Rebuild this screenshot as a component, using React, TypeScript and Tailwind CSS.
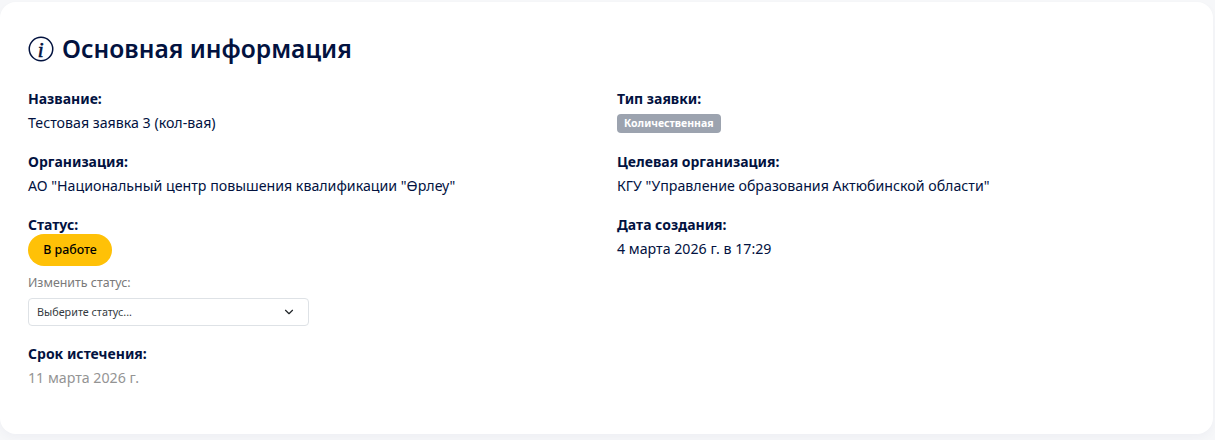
import { ChevronDown } from 'lucide-react';

function InfoIcon() {
  return (
    <svg width="26" height="26" viewBox="0 0 26 26" fill="none" className="shrink-0">
      <circle cx="13" cy="13" r="11.75" stroke="#02123f" strokeWidth="1.5" />
      <text x="12.7" y="20.5" textAnchor="middle" fontFamily="'Liberation Serif', serif" fontStyle="italic" fontSize="21" fill="#02123f" stroke="#02123f" strokeWidth="0.6">
        i
      </text>
    </svg>
  );
}

function Label({ children }: { children: React.ReactNode }) {
  return <div className="text-[14px] leading-[21px] font-bold text-[#02123f]">{children}</div>;
}

function Field({ label, value }: { label: string; value: string }) {
  return (
    <div className="mb-[18px]">
      <Label>{label}</Label>
      <div className="mt-[3px] text-[14.2px] leading-[21px] text-[#02123f]">{value}</div>
    </div>
  );
}

export default function App() {
  return (
    <div className="h-[440px] w-[1215px] overflow-hidden bg-[#f6f7f9] font-['Noto_Sans',sans-serif]">
      <div className="mr-[2px] mt-[2px] h-[432px] rounded-[16px] bg-white px-[28px] pt-[29px] shadow-[0_4px_10px_rgba(20,30,80,0.03)]">
        <div className="mb-[21px] flex h-[36px] items-center gap-[8px]">
          <InfoIcon />
          <h2 className="text-[24.6px] leading-[36px] font-semibold text-[#02123f]">Основная информация</h2>
        </div>
        <div className="grid grid-cols-[589px_1fr]">
          <div>
            <Field label="Название:" value="Тестовая заявка 3 (кол-вая)" />
            <Field label="Организация:" value='АО "Национальный центр повышения квалификации "Өрлеу"' />
            <div className="mb-[17px]">
              <Label>Статус:</Label>
              <span className="-mt-[1px] flex h-[32px] w-[84px] items-center justify-center rounded-[16px] bg-[#ffc107] text-[12.4px] font-medium text-black">
                В работе
              </span>
              <div className="mt-[8px] text-[12.4px] leading-[18px] text-[#7a7a7a]">Изменить статус:</div>
              <div className="mt-[6px] flex h-[28px] w-[281px] items-center justify-between rounded-[4px] border border-[#dee2e6] pl-[8px] pr-[12px] text-[10.8px] text-[#343a40]">
                <span>Выберите статус...</span>
                <ChevronDown size={14} strokeWidth={2} className="text-[#212529]" />
              </div>
            </div>
            <Label>Срок истечения:</Label>
            <div className="mt-[3px] text-[14.2px] leading-[21px] text-[#949494]">11 марта 2026 г.</div>
          </div>
          <div>
            <div className="mb-[18px]">
              <Label>Тип заявки:</Label>
              <div className="mt-[5px] flex h-[19px] items-center">
                <span className="inline-flex h-[19px] items-center rounded-[4px] bg-[#9ca3af] px-[7px] text-[10.5px] font-bold text-white">
                  Количественная
                </span>
              </div>
            </div>
            <Field label="Целевая организация:" value='КГУ "Управление образования Актюбинской области"' />
            <Field label="Дата создания:" value="4 марта 2026 г. в 17:29" />
          </div>
        </div>
      </div>
    </div>
  );
}
